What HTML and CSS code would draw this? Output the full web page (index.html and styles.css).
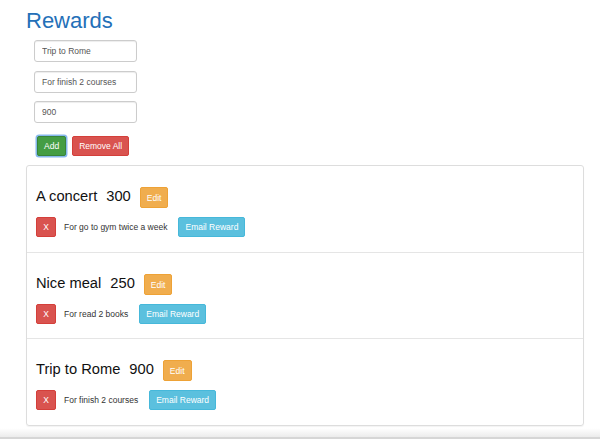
FILE: index.html
```html
<!DOCTYPE html>
<html>
<head>
<meta charset="utf-8">
<title>Rewards</title>
<link rel="stylesheet" href="styles.css">
</head>
<body>
<div class="page">
  <h1 class="title">Rewards</h1>
  <form class="form">
    <input class="field" type="text" value="Trip to Rome">
    <input class="field" type="text" value="For finish 2 courses">
    <input class="field" type="text" value="900">
    <div class="actions">
      <button type="button" class="btn btn-add">Add</button>
      <button type="button" class="btn btn-danger">Remove All</button>
    </div>
  </form>
  <div class="panel">
    <div class="row">
      <div class="line-top">
        <span class="name">A concert</span><span class="pts">300</span>
        <button type="button" class="btn btn-warning">Edit</button>
      </div>
      <div class="line-bottom">
        <button type="button" class="btn btn-danger btn-x">X</button>
        <span class="desc">For go to gym twice a week</span>
        <button type="button" class="btn btn-info">Email Reward</button>
      </div>
    </div>
    <div class="row">
      <div class="line-top">
        <span class="name">Nice meal</span><span class="pts">250</span>
        <button type="button" class="btn btn-warning">Edit</button>
      </div>
      <div class="line-bottom">
        <button type="button" class="btn btn-danger btn-x">X</button>
        <span class="desc">For read 2 books</span>
        <button type="button" class="btn btn-info">Email Reward</button>
      </div>
    </div>
    <div class="row">
      <div class="line-top">
        <span class="name">Trip to Rome</span><span class="pts">900</span>
        <button type="button" class="btn btn-warning">Edit</button>
      </div>
      <div class="line-bottom">
        <button type="button" class="btn btn-danger btn-x">X</button>
        <span class="desc">For finish 2 courses</span>
        <button type="button" class="btn btn-info">Email Reward</button>
      </div>
    </div>
  </div>
</div>
</body>
</html>
```
FILE: styles.css
```css
html, body {
  margin: 0;
  padding: 0;
  background: #fff;
}
body {
  font-family: "Liberation Sans", Arial, sans-serif;
  color: #222;
  height: 439px;
  overflow: hidden;
}
body::after {
  content: "";
  position: fixed;
  left: 0;
  right: 0;
  bottom: 0;
  height: 11px;
  background: linear-gradient(to bottom, rgba(235,235,235,0), #ececec 80%, #d6d6d6 82%, #d6d6d6);
}
.page {
  padding: 8px 16px 0 26px;
}
.title {
  margin: 0;
  font-size: 22px;
  line-height: 25px;
  font-weight: normal;
  color: #2470b8;
}
.form {
  display: flex;
  flex-direction: column;
  align-items: flex-start;
  gap: 8.5px;
  margin: 7px 0 0 8px;
}
.field {
  box-sizing: border-box;
  width: 103px;
  height: 22px;
  margin: 0;
  padding: 4px 7px;
  border: 1px solid #ccc;
  border-radius: 3px;
  box-shadow: inset 0 1px 1px rgba(0,0,0,.075);
  font-family: inherit;
  font-size: 8.5px;
  color: #555;
  background: #fff;
}
.actions {
  display: flex;
  gap: 6px;
  margin: 4.5px 0 0 3px;
}
.btn {
  box-sizing: border-box;
  margin: 0;
  padding: 3px 6px;
  border: 1px solid transparent;
  border-radius: 2px;
  font-family: inherit;
  font-size: 8.5px;
  line-height: 12px;
  color: #fff;
  white-space: nowrap;
}
.btn-add {
  background: #449d44;
  border-color: #398439;
  box-shadow: 0 0 0 1.5px #86b8ec;
}
.btn-danger {
  background: #d9534f;
  border-color: #d43f3a;
}
.btn-warning {
  background: #f0ad4e;
  border-color: #eea236;
  padding-top: 4px;
  padding-bottom: 3px;
}
.btn-info {
  background: #5bc0de;
  border-color: #46b8da;
}
.panel {
  margin-top: 9px;
  border: 1px solid #ddd;
  border-radius: 3px;
  box-shadow: 0 1px 1px rgba(0,0,0,.05);
}
.row {
  padding: 20px 9px 14.5px;
  border-top: 1px solid #e5e5e5;
}
.row:first-child {
  border-top: 0;
}
.line-top {
  display: flex;
  align-items: baseline;
}
.name, .pts {
  font-size: 14.7px;
  line-height: 21px;
  color: #111;
}
.pts {
  margin-left: 9px;
}
.line-top .btn {
  margin-left: 9px;
}
.line-bottom {
  display: flex;
  align-items: center;
  margin-top: 9px;
}
.btn-x {
  width: 20px;
  padding-left: 0;
  padding-right: 0;
  text-align: center;
}
.desc {
  margin-left: 8px;
  font-size: 8.5px;
  color: #333;
}
.line-bottom .btn-info {
  margin-left: 11px;
}
```
